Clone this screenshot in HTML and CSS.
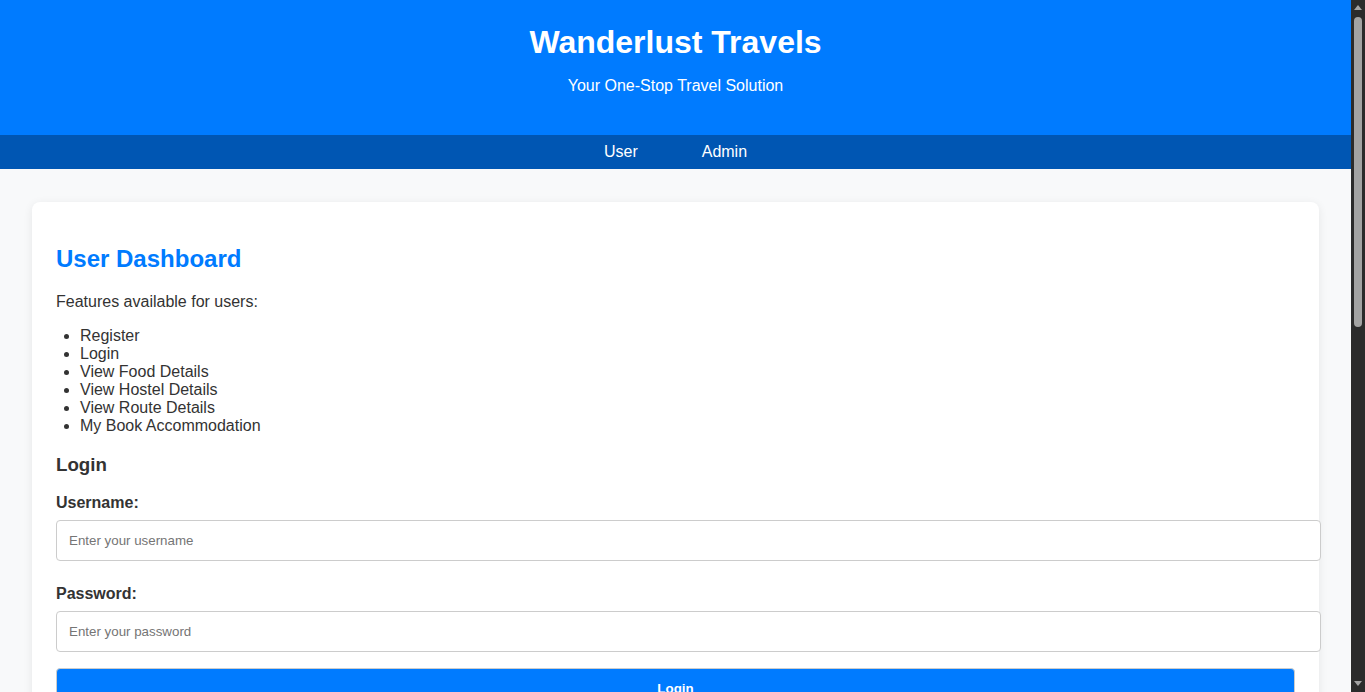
FILE: index.html
```html
<!DOCTYPE html>
<html lang="en">
<head>
<meta charset="utf-8">
<title>Wanderlust Travels</title>
<link rel="stylesheet" href="styles.css">
</head>
<body>
<header class="site-header">
  <h1 class="site-title">Wanderlust Travels</h1>
  <p class="site-tagline">Your One-Stop Travel Solution</p>
</header>
<nav class="site-nav">
  <a href="#" class="nav-link">User</a>
  <a href="#" class="nav-link">Admin</a>
</nav>
<main class="main">
  <section class="card">
    <h2 class="card-title">User Dashboard</h2>
    <p class="card-text">Features available for users:</p>
    <ul class="feature-list">
      <li>Register</li>
      <li>Login</li>
      <li>View Food Details</li>
      <li>View Hostel Details</li>
      <li>View Route Details</li>
      <li>My Book Accommodation</li>
    </ul>
    <h3 class="form-title">Login</h3>
    <form class="login-form">
      <label class="form-label" for="username">Username:</label>
      <input class="form-input" id="username" type="text" placeholder="Enter your username">
      <label class="form-label form-label-spaced" for="password">Password:</label>
      <input class="form-input" id="password" type="password" placeholder="Enter your password">
      <button class="form-button" type="button">Login</button>
    </form>
  </section>
</main>
<div class="scrollbar" aria-hidden="true">
  <span class="sb-up"></span>
  <span class="sb-thumb"></span>
  <span class="sb-down"></span>
</div>
</body>
</html>
```
FILE: styles.css
```css
html, body {
  margin: 0;
  padding: 0;
}
body {
  font-family: "Liberation Sans", Arial, sans-serif;
  background: #f8f9fa;
  color: #333;
  padding-right: 14px;
}
.site-header {
  background: #007bff;
  color: #fff;
  text-align: center;
  padding: 24px 0;
}
.site-title {
  margin: 0;
  font-size: 32px;
}
.site-tagline {
  margin: 16px 0;
  font-size: 16px;
}
.site-nav {
  background: #0056b3;
  display: flex;
  justify-content: center;
  gap: 64px;
  padding: 8px 0;
}
.nav-link {
  color: #fff;
  text-decoration: none;
  font-size: 16px;
  line-height: 18px;
}
.main {
  padding: 33px 32px 32px 32px;
}
.card {
  background: #fff;
  border-radius: 8px;
  box-shadow: 0 2px 10px rgba(0, 0, 0, 0.08);
  padding: 24px;
}
.card-title {
  color: #007bff;
  font-size: 24px;
  margin: 19px 0 20px;
}
.card-text {
  margin: 16px 0;
}
.feature-list {
  margin: 16px 0;
  padding-left: 24px;
}
.form-title {
  font-size: 18.72px;
  margin: 18.72px 0;
}
.login-form {
  display: flex;
  flex-direction: column;
  align-items: flex-start;
}
.form-label {
  display: block;
  font-weight: bold;
  margin: 0 0 8px;
}
.form-label-spaced {
  margin-top: 8px;
}
.form-input {
  display: block;
  width: 100%;
  padding: 12px;
  border: 1px solid #ccc;
  border-radius: 4px;
  font-family: "Liberation Sans", Arial, sans-serif;
  font-size: 13.33px;
  margin: 0 0 16px;
}
.form-input::placeholder {
  color: #757575;
}
.form-button {
  display: block;
  width: 100%;
  padding: 12px;
  background: #007bff;
  color: #fff;
  border: 1px solid #ccc;
  border-radius: 4px;
  font-family: "Liberation Sans", Arial, sans-serif;
  font-size: 13.33px;
  font-weight: bold;
}
.scrollbar {
  position: fixed;
  top: 0;
  right: 0;
  width: 14px;
  height: 100vh;
  box-sizing: border-box;
  padding: 5px 0 6px;
  background: #2b2b2b;
  display: flex;
  flex-direction: column;
  align-items: center;
}
.sb-up {
  width: 0;
  height: 0;
  border-left: 4px solid transparent;
  border-right: 4px solid transparent;
  border-bottom: 5px solid #a3a3a3;
}
.sb-thumb {
  width: 8px;
  height: 310px;
  margin-top: 7px;
  background: #a3a3a3;
  border-radius: 4px;
}
.sb-down {
  margin-top: auto;
  width: 0;
  height: 0;
  border-left: 4px solid transparent;
  border-right: 4px solid transparent;
  border-top: 5px solid #a3a3a3;
}
```
